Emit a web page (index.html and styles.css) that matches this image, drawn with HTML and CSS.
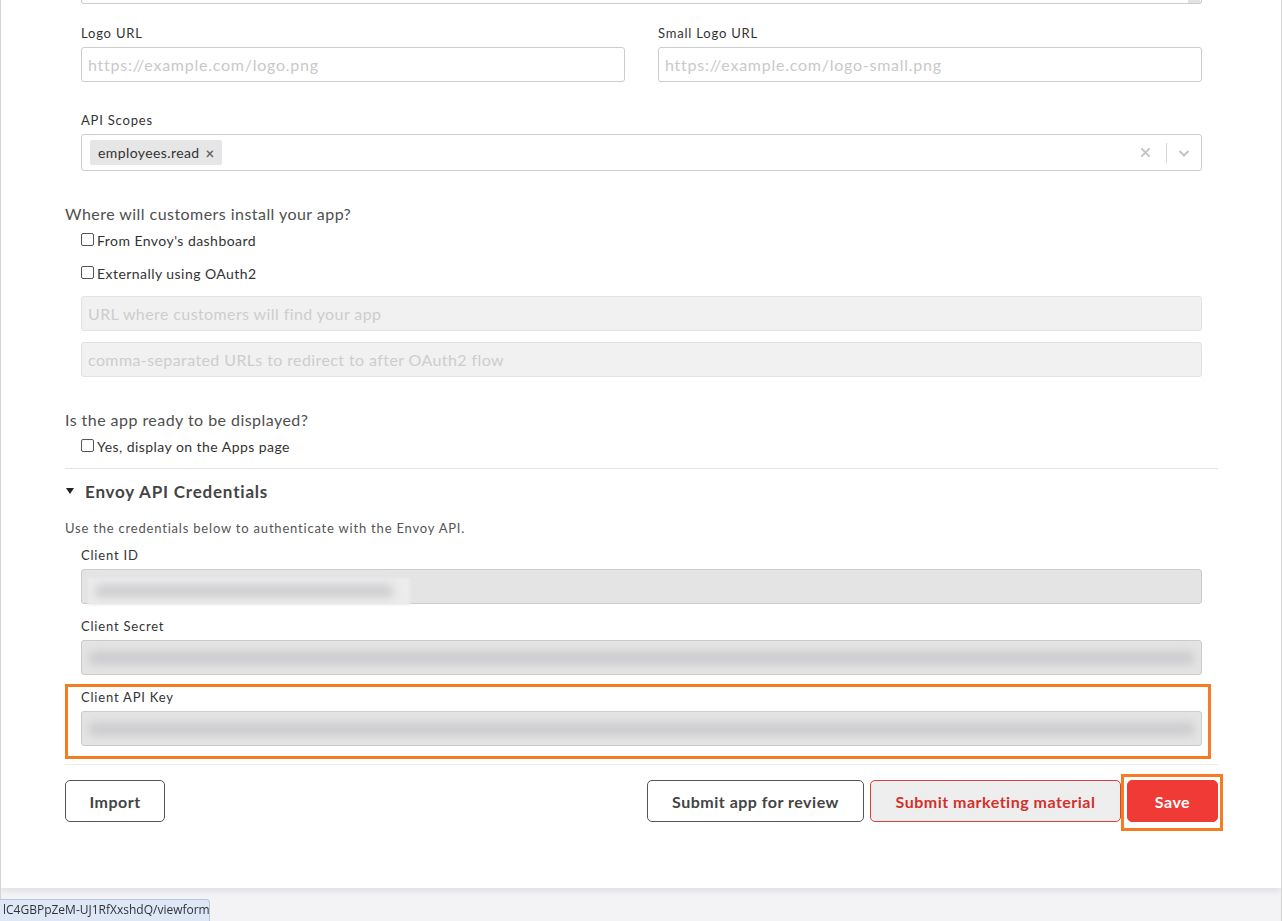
FILE: index.html
```html
<!DOCTYPE html>
<html>
  <head>
    <meta charset="UTF-8" />
    <link rel="stylesheet" href="styles.css">
  </head>
  <body>
    <div class="card">
      <div class="indent">
        <div class="textarea-tail"><span class="grip"></span></div>

        <div class="row-2">
          <div class="field">
            <div class="label">Logo URL</div>
            <div class="input"><span class="placeholder url">https://example.com/logo.png</span></div>
          </div>
          <div class="field">
            <div class="label">Small Logo URL</div>
            <div class="input"><span class="placeholder url">https://example.com/logo-small.png</span></div>
          </div>
        </div>

        <div class="field scopes">
          <div class="label">API Scopes</div>
          <div class="select">
            <div class="select-values">
              <span class="tag">employees.read <span class="tag-x">×</span></span>
            </div>
            <div class="select-indicators">
              <svg class="ind-clear" viewBox="0 0 12 12" width="11" height="11">
                <path d="M1.5 1.5 L10.5 10.5 M10.5 1.5 L1.5 10.5" stroke="#c4c4c4" stroke-width="2.2" fill="none"/>
              </svg>
              <span class="ind-sep"></span>
              <svg class="ind-chevron" viewBox="0 0 12 12" width="12" height="12">
                <path d="M1.5 4 L6 8.5 L10.5 4" stroke="#c4c4c4" stroke-width="2" fill="none"/>
              </svg>
            </div>
          </div>
        </div>
      </div>

      <div class="question">Where will customers install your app?</div>
      <div class="indent">
        <label class="check"><span class="box"></span>From Envoy's dashboard</label>
        <label class="check"><span class="box"></span>Externally using OAuth2</label>
        <div class="input disabled first"><span class="placeholder">URL where customers will find your app</span></div>
        <div class="input disabled"><span class="placeholder">comma-separated URLs to redirect to after OAuth2 flow</span></div>
      </div>

      <div class="question second">Is the app ready to be displayed?</div>
      <div class="indent">
        <label class="check"><span class="box"></span>Yes, display on the Apps page</label>
      </div>

      <hr class="divider">

      <div class="section-title"><span class="caret"></span>Envoy API Credentials</div>
      <div class="section-desc">Use the credentials below to authenticate with the Envoy API.</div>

      <div class="indent">
        <div class="field cred">
          <div class="label">Client ID</div>
          <div class="input readonly"><span class="blur-patch"><span class="blur short"></span></span></div>
        </div>
        <div class="field cred">
          <div class="label">Client Secret</div>
          <div class="input readonly"><span class="blur long"></span></div>
        </div>
      </div>

      <div class="highlight">
        <div class="field">
          <div class="label">Client API Key</div>
          <div class="input readonly"><span class="blur long"></span></div>
        </div>
      </div>

      <hr class="divider light">

      <div class="actions">
        <button class="btn btn-import">Import</button>
        <div class="actions-right">
          <button class="btn btn-review">Submit app for review</button>
          <button class="btn btn-marketing">Submit marketing material</button>
          <span class="save-ring"><button class="btn btn-save">Save</button></span>
        </div>
      </div>
    </div>

    <div class="status-url">lC4GBPpZeM-UJ1RfXxshdQ/viewform</div>
  </body>
</html>
```

FILE: styles.css
```css
:root {
  --text: #3d3d3d;
  --muted: #4f4f4f;
  --border: #cccccc;
  --placeholder: #c9c9c9;
  --orange: #f57c22;
  --red: #ef3a35;
}

* {
  margin: 0;
  padding: 0;
  box-sizing: border-box;
}

body {
  font-family: Lato, "Open Sans", sans-serif;
  background-color: #f3f3f5;
  color: var(--text);
  height: 921px;
  overflow: hidden;
  border-left: 1px solid #d4d4d4;
  border-right: 1px solid #d4d4d4;
}

.card {
  background-color: #ffffff;
  height: 888px;
  padding: 0 63px 0 64px;
  box-shadow: 0 3px 6px rgba(0, 0, 0, 0.08);
}

.indent {
  padding: 0 16px;
}

/* tail end of the description textarea above */
.textarea-tail {
  height: 4px;
  border: 1px solid var(--border);
  border-top: none;
  border-radius: 0 0 3px 3px;
  position: relative;
}

.grip {
  position: absolute;
  right: 1px;
  top: 0;
  width: 12px;
  height: 3px;
  background-color: #e3e3e3;
}

.row-2 {
  display: grid;
  grid-template-columns: 1fr 1fr;
  gap: 33px;
  margin-top: 20px;
}

.label {
  font-size: 13px;
  line-height: 18px;
  letter-spacing: 0.8px;
  color: #333;
  margin-bottom: 5px;
}

.input {
  height: 35px;
  border: 1px solid var(--border);
  border-radius: 3px;
  padding: 0 6px;
  display: flex;
  align-items: center;
  font-size: 16px;
  overflow: hidden;
}

.placeholder {
  color: var(--placeholder);
  white-space: nowrap;
  letter-spacing: 0.4px;
}

.placeholder.url {
  letter-spacing: 0.75px;
}

.scopes {
  margin-top: 29px;
}

.select {
  height: 37px;
  border: 1px solid var(--border);
  border-radius: 3px;
  display: flex;
  align-items: center;
  justify-content: space-between;
  padding: 0 11px 0 8px;
}

.tag {
  display: inline-flex;
  align-items: center;
  height: 25px;
  background-color: #e6e6e6;
  border-radius: 2px;
  padding: 0 7px 0 8px;
  font-size: 14px;
  letter-spacing: 0.4px;
  color: #333;
}

.tag-x {
  margin-left: 6px;
  font-size: 15px;
  font-weight: 700;
  color: #666;
}

.select-indicators {
  display: flex;
  align-items: center;
}

.ind-sep {
  width: 1px;
  height: 20px;
  background-color: #d6d6d6;
  margin: 0 11px 0 15px;
}

.question {
  font-size: 16px;
  line-height: 22px;
  letter-spacing: 0.45px;
  color: var(--muted);
  margin-top: 32px;
}

.check {
  display: flex;
  align-items: center;
  font-size: 14px;
  line-height: 20px;
  letter-spacing: 0.45px;
  color: #333;
  margin-top: 6px;
  height: 20px;
}

.check + .check {
  margin-top: 13px;
}

.box {
  width: 13px;
  height: 13px;
  border: 1px solid #555;
  border-radius: 2px;
  margin: -4px 3px 0 0;
}

.input.disabled {
  background-color: #f1f1f1;
  border-color: #e2e2e2;
  margin-top: 11px;
}

.input.disabled.first {
  margin-top: 12px;
}

.input.disabled .placeholder {
  color: #cdcdcd;
}

.divider {
  border: none;
  border-top: 1px solid #e2e2e2;
  margin-top: 11px;
}

.divider.light {
  border-top-color: #ececec;
  margin-top: 5px;
}

.section-title {
  display: flex;
  align-items: center;
  font-size: 17px;
  font-weight: 700;
  line-height: 24px;
  letter-spacing: 0.8px;
  color: #444;
  margin-top: 11px;
}

.caret {
  width: 0;
  height: 0;
  border-left: 4.5px solid transparent;
  border-right: 4.5px solid transparent;
  border-top: 6px solid #222;
  margin: 0 11px 3px 1px;
}

.section-desc {
  font-size: 13px;
  line-height: 18px;
  letter-spacing: 0.8px;
  color: #555;
  margin-top: 15px;
}

.cred {
  margin-top: 9px;
}

.cred + .cred {
  margin-top: 13px;
}

.input.readonly {
  background-color: #e4e4e4;
  border-color: #cbcbcb;
  padding: 0 6px;
  overflow: visible;
}

.blur-patch {
  display: flex;
  align-items: center;
  background-color: #ececec;
  width: 322px;
  height: 27px;
  margin-top: 9px;
  filter: blur(1px);
}

.blur {
  height: 14px;
  border-radius: 7px;
  background-color: #cdcdd0;
  filter: blur(4px);
}

.blur.short {
  width: 300px;
  margin-left: 6px;
  background-color: #d0d0d3;
}

.blur.long {
  width: 100%;
}

.highlight {
  border: 3px solid var(--orange);
  margin: 9px 7px 0 0;
  padding: 1px 6px 10px 13px;
}

.actions {
  display: flex;
  justify-content: space-between;
  align-items: flex-start;
  margin-top: 15px;
}

.actions-right {
  display: flex;
  align-items: flex-start;
  gap: 6px;
}

.btn {
  height: 42px;
  border: 1px solid #555;
  border-radius: 5px;
  background-color: #fff;
  font-family: Lato, "Open Sans", sans-serif;
  font-size: 16px;
  font-weight: 700;
  letter-spacing: 0.5px;
  color: #444;
}

.btn-import {
  width: 100px;
}

.btn-review {
  width: 217px;
}

.btn-marketing {
  width: 251px;
  background-color: #eeeeee;
  border-color: #d9413c;
  color: #d3302b;
}

.btn-save {
  background-color: var(--red);
  border-color: var(--red);
  color: #fff;
  width: 91px;
}

.save-ring {
  display: inline-block;
  border: 3px solid var(--orange);
  padding: 3px 2px 6px 3px;
  margin: -6px -5px -9px -6px;
}

.status-url {
  position: fixed;
  left: 0;
  bottom: 0;
  width: 210px;
  height: 22px;
  padding-left: 3px;
  background-color: #dee7f6;
  border: 1px solid #b9c7de;
  border-left: none;
  border-bottom: none;
  border-radius: 0 4px 0 0;
  font-family: "Open Sans", sans-serif;
  font-size: 12px;
  line-height: 20px;
  color: #333;
  white-space: nowrap;
  overflow: hidden;
}
```
